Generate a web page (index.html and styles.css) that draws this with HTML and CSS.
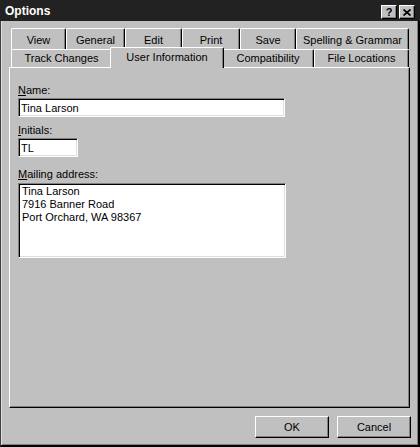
FILE: index.html
```html
<!DOCTYPE html>
<html lang="en">
<head>
    <meta charset="UTF-8">
    <meta name="viewport" content="width=device-width, initial-scale=1.0">
    <title>Options</title>
    <link rel="stylesheet" href="styles.css">
</head>
<body>
    <div class="window">
        <div class="titlebar">
            <span class="title">Options</span>
            <div class="caption-buttons">
                <button class="caption-btn caption-help">?</button>
                <button class="caption-btn caption-close">
                    <svg width="8" height="7" viewBox="0 0 8 7">
                        <path d="M0.5 0.5 L7.5 6.5 M7.5 0.5 L0.5 6.5" stroke="#000" stroke-width="1.7" fill="none"/>
                    </svg>
                </button>
            </div>
        </div>

        <div class="frame">
            <div class="tabs">
                <div class="tab-row tab-row-back">
                    <div class="tab">View</div>
                    <div class="tab">General</div>
                    <div class="tab">Edit</div>
                    <div class="tab">Print</div>
                    <div class="tab">Save</div>
                    <div class="tab">Spelling &amp; Grammar</div>
                </div>
                <div class="tab-row tab-row-front">
                    <div class="tab">Track Changes</div>
                    <div class="tab tab-selected">User Information</div>
                    <div class="tab">Compatibility</div>
                    <div class="tab">File Locations</div>
                </div>
            </div>

            <div class="panel">
                <label class="field-label" for="name"><u>N</u>ame:</label>
                <input class="field field-name" id="name" type="text" value="Tina Larson">

                <label class="field-label label-initials" for="initials"><u>I</u>nitials:</label>
                <input class="field field-initials" id="initials" type="text" value="TL">

                <label class="field-label label-address" for="address"><u>M</u>ailing address:</label>
                <textarea class="field field-address" id="address">Tina Larson
7916 Banner Road
Port Orchard, WA 98367</textarea>
            </div>

            <div class="footer">
                <button class="btn">OK</button>
                <button class="btn">Cancel</button>
            </div>
        </div>
    </div>
</body>
</html>
```

FILE: styles.css
```css
* {
    box-sizing: border-box;
}

body {
    margin: 0;
    font-family: "Liberation Sans", Arial, sans-serif;
    font-size: 11px;
    color: #000;
    background-color: #c0c0c0;
}

.window {
    width: 420px;
    height: 447px;
    display: flex;
    flex-direction: column;
    background-color: #c0c0c0;
}

/* Title bar */
.titlebar {
    height: 21px;
    flex: 0 0 21px;
    display: flex;
    align-items: flex-start;
    padding: 0 5px 0 5px;
    background-color: #222;
}

.title {
    margin-top: 1px;
    padding-top: 2px;
    line-height: 17px;
    font-size: 12px;
    font-weight: bold;
    color: #fff;
}

.caption-buttons {
    display: flex;
    gap: 2px;
    margin-left: auto;
    margin-top: 5px;
}

.caption-btn {
    width: 16px;
    height: 14px;
    padding: 0;
    display: flex;
    align-items: center;
    justify-content: center;
    background-color: #c0c0c0;
    border: 1px solid;
    border-color: #fff #000 #000 #fff;
    box-shadow: inset -1px -1px #808080;
    font-family: "Liberation Sans", Arial, sans-serif;
    font-size: 11px;
    font-weight: bold;
    line-height: 1;
    color: #000;
}

/* Window body */
.frame {
    flex: 1;
    display: flex;
    flex-direction: column;
    padding: 7px 8px 0 8px;
    border-left: 1px solid #404040;
    border-right: 2px solid #000;
    border-bottom: 2px solid #000;
    box-shadow: inset 1px 0 #dfdfdf, inset -1px -1px #808080;
}

/* Tabs */
.tab-row {
    display: grid;
    margin: 0 1px 0 2px;
}

.tab-row-back {
    grid-template-columns: 55px 59px 57px 58px 56px 113px;
}

.tab-row-front {
    grid-template-columns: 101px 110px 92px 95px;
}

.tab {
    background-color: #c0c0c0;
    border-top: 1px solid #fff;
    border-left: 1px solid #fff;
    border-right: 1px solid #000;
    border-radius: 2px 2px 0 0;
    box-shadow: inset -1px 0 #808080;
    text-align: center;
    line-height: 13px;
    white-space: nowrap;
}

.tab-row-back .tab {
    height: 21px;
    padding-top: 5px;
}

.tab-row-front .tab {
    height: 18px;
    padding-top: 2px;
}

.tab-row-front .tab-selected {
    position: relative;
    z-index: 1;
    height: 21px;
    margin: -2px -2px -1px -2px;
    padding-top: 3px;
}

/* Tab page */
.panel {
    flex: 0 0 341px;
    display: flex;
    flex-direction: column;
    align-items: flex-start;
    padding: 16px 8px;
    border: 1px solid;
    border-color: #fff #000 #000 #fff;
    box-shadow: inset -1px -1px #808080;
}

.field-label {
    display: block;
    line-height: 13px;
    margin-bottom: 1px;
}

.label-initials {
    margin-top: 7px;
}

.label-address {
    margin-top: 11px;
    margin-bottom: 2px;
}

.field {
    margin: 0;
    padding: 0 2px;
    font-family: "Liberation Sans", Arial, sans-serif;
    font-size: 11px;
    color: #000;
    background-color: #fff;
    border: 1px solid;
    border-color: #808080 #fff #fff #808080;
    box-shadow: inset 1px 1px #000, inset -1px -1px #dfdfdf;
    border-radius: 0;
    outline: none;
}

.field-name {
    width: 267px;
    height: 19px;
    line-height: 15px;
}

.field-initials {
    width: 60px;
    height: 19px;
    line-height: 15px;
}

.field-address {
    width: 268px;
    height: 75px;
    padding: 1px 2px 0 3px;
    line-height: 13px;
    resize: none;
    overflow: hidden;
    white-space: pre;
}

/* Dialog buttons */
.footer {
    display: flex;
    justify-content: flex-end;
    gap: 8px;
    padding-top: 8px;
    margin-right: -1px;
}

.btn {
    width: 74px;
    height: 22px;
    padding: 0;
    background-color: #c0c0c0;
    border: 1px solid;
    border-color: #fff #000 #000 #fff;
    box-shadow: inset -1px -1px #808080;
    font-family: "Liberation Sans", Arial, sans-serif;
    font-size: 11px;
    line-height: 13px;
    color: #000;
}
```
